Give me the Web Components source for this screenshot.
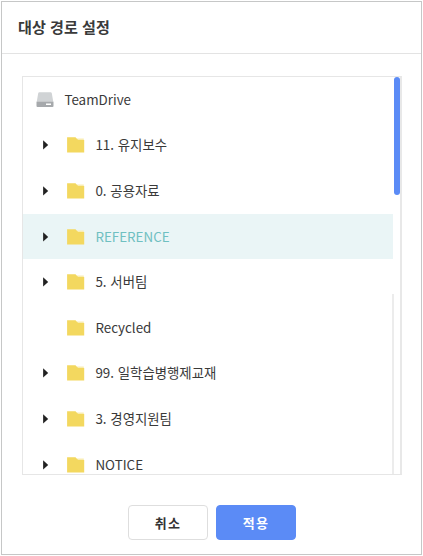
<!DOCTYPE html>
<html lang="ko">
<head>
<meta charset="UTF-8">
<title>대상 경로 설정</title>
<style>
  body {
    margin: 0;
    padding: 1px;
    box-sizing: border-box;
    height: 556px;
    background: #fff;
    color: #3a3a3a;
    font-family: "Noto Sans CJK KR", "Noto Sans", sans-serif;
    overflow: hidden;
  }
</style>
</head>
<body>
  <path-dialog>
    <span slot="title">대상 경로 설정</span>
    <folder-tree>
      <tree-item type="drive">TeamDrive</tree-item>
      <tree-item expandable>11. 유지보수</tree-item>
      <tree-item expandable>0. 공용자료</tree-item>
      <tree-item expandable selected>REFERENCE</tree-item>
      <tree-item expandable>5. 서버팀</tree-item>
      <tree-item>Recycled</tree-item>
      <tree-item expandable>99. 일학습병행제교재</tree-item>
      <tree-item expandable>3. 경영지원팀</tree-item>
      <tree-item expandable>NOTICE</tree-item>
    </folder-tree>
    <dialog-button slot="actions">취소</dialog-button>
    <dialog-button slot="actions" primary>적용</dialog-button>
  </path-dialog>

<script>
class PathDialog extends HTMLElement {
  constructor() {
    super();
    this.attachShadow({ mode: "open" });
  }

  connectedCallback() {
    this.shadowRoot.innerHTML = `
      <style>
        :host {
          display: flex;
          flex-direction: column;
          box-sizing: border-box;
          width: 421px;
          height: 554px;
          border: 1px solid #c6c7c7;
          background: #fff;
        }

        header {
          display: flex;
          align-items: center;
          box-sizing: border-box;
          height: 52px;
          padding: 0 16px 3px;
          border-bottom: 1px solid #e3e3e3;
          font-size: 15.1px;
          font-weight: 700;
          color: #3a3a3a;
        }

        main {
          padding: 22px 19px 0 20px;
        }

        footer {
          display: flex;
          justify-content: center;
          gap: 8px;
          padding: 30px 0 0 1px;
        }
      </style>
      <header><slot name="title"></slot></header>
      <main><slot></slot></main>
      <footer><slot name="actions"></slot></footer>
    `;
  }
}

class FolderTree extends HTMLElement {
  constructor() {
    super();
    this.attachShadow({ mode: "open" });
  }

  connectedCallback() {
    this.shadowRoot.innerHTML = `
      <style>
        :host {
          display: flex;
          box-sizing: border-box;
          height: 399px;
          border: 1px solid #e6e6e6;
          border-right: 2px solid #e8e8e8;
          overflow: hidden;
        }

        .list {
          flex: 1;
          min-width: 0;
        }

        .scroll {
          position: relative;
          width: 7px;
        }

        .thumb {
          width: 6px;
          height: 118px;
          margin-left: 1px;
          border-radius: 3px;
          background: #5b8bf6;
        }

        .track {
          position: absolute;
          left: -1px;
          top: 217px;
          bottom: 0;
          width: 2px;
          background: #ececec;
        }
      </style>
      <div class="list"><slot></slot></div>
      <div class="scroll">
        <div class="thumb"></div>
        <div class="track"></div>
      </div>
    `;
  }
}

class TreeItem extends HTMLElement {
  constructor() {
    super();
    this.attachShadow({ mode: "open" });
  }

  connectedCallback() {
    this.render();
  }

  icon() {
    if (this.getAttribute("type") === "drive") {
      return `
        <svg class="drive" width="18" height="16" viewBox="0 0 18 16">
          <path d="M3.4 .3h11.2q1 0 1.2 1L17.3 10H.7L2.2 1.3q.2-1 1.2-1z" fill="#d0d3d5"/>
          <path d="M.5 9.7h17v4.2q0 1-1 1h-15q-1 0-1-1z" fill="#a6a9ac"/>
          <path d="M10 11.5h5v1.5h-5z" fill="#fff"/>
        </svg>`;
    }
    return `
      <svg width="18" height="16" viewBox="0 0 18 16">
        <path d="M10 1.5h6.8v3H10z" fill="#f9edb2"/>
        <path d="M.1 .2h8.4l2.6 2.9h6.1v12.3H.1z" fill="#f3d85f"/>
      </svg>`;
  }

  render() {
    const arrow = this.hasAttribute("expandable")
      ? `<svg width="6" height="10" viewBox="0 0 6 10"><path d="M.1 .3L5.2 4.9L.1 9.5z" fill="#222"/></svg>`
      : "";

    this.shadowRoot.innerHTML = `
      <style>
        :host {
          display: flex;
          align-items: center;
          box-sizing: border-box;
          height: 45.6px;
          padding-left: 20px;
          font-size: 13.4px;
          line-height: 20px;
          white-space: nowrap;
        }

        :host([type="drive"]) {
          padding-left: 13px;
        }

        :host([selected]) {
          background: #eaf5f6;
          color: #6fc0c1;
        }

        svg {
          display: block;
          flex: none;
        }

        .arrow {
          width: 24px;
        }

        :host([type="drive"]) .arrow {
          display: none;
        }

        .label {
          margin-left: 10.4px;
          padding-bottom: 2px;
        }
      </style>
      <span class="arrow">${arrow}</span>
      ${this.icon()}
      <span class="label"><slot></slot></span>
    `;
  }
}

class DialogButton extends HTMLElement {
  constructor() {
    super();
    this.attachShadow({ mode: "open" });
  }

  connectedCallback() {
    this.shadowRoot.innerHTML = `
      <style>
        :host {
          display: block;
        }

        button {
          display: block;
          box-sizing: border-box;
          width: 80px;
          height: 35px;
          padding: 0 0 1px;
          border: 1px solid #dedede;
          border-radius: 4px;
          background: #fff;
          color: #333;
          font: 700 13px "Noto Sans CJK KR", sans-serif;
          letter-spacing: 1.2px;
          cursor: pointer;
        }

        :host([primary]) button {
          border-color: #5b8bf6;
          background: #5b8bf6;
          color: #fff;
        }
      </style>
      <button type="button"><slot></slot></button>
    `;
  }
}

customElements.define("path-dialog", PathDialog);
customElements.define("folder-tree", FolderTree);
customElements.define("tree-item", TreeItem);
customElements.define("dialog-button", DialogButton);
</script>
</body>
</html>
